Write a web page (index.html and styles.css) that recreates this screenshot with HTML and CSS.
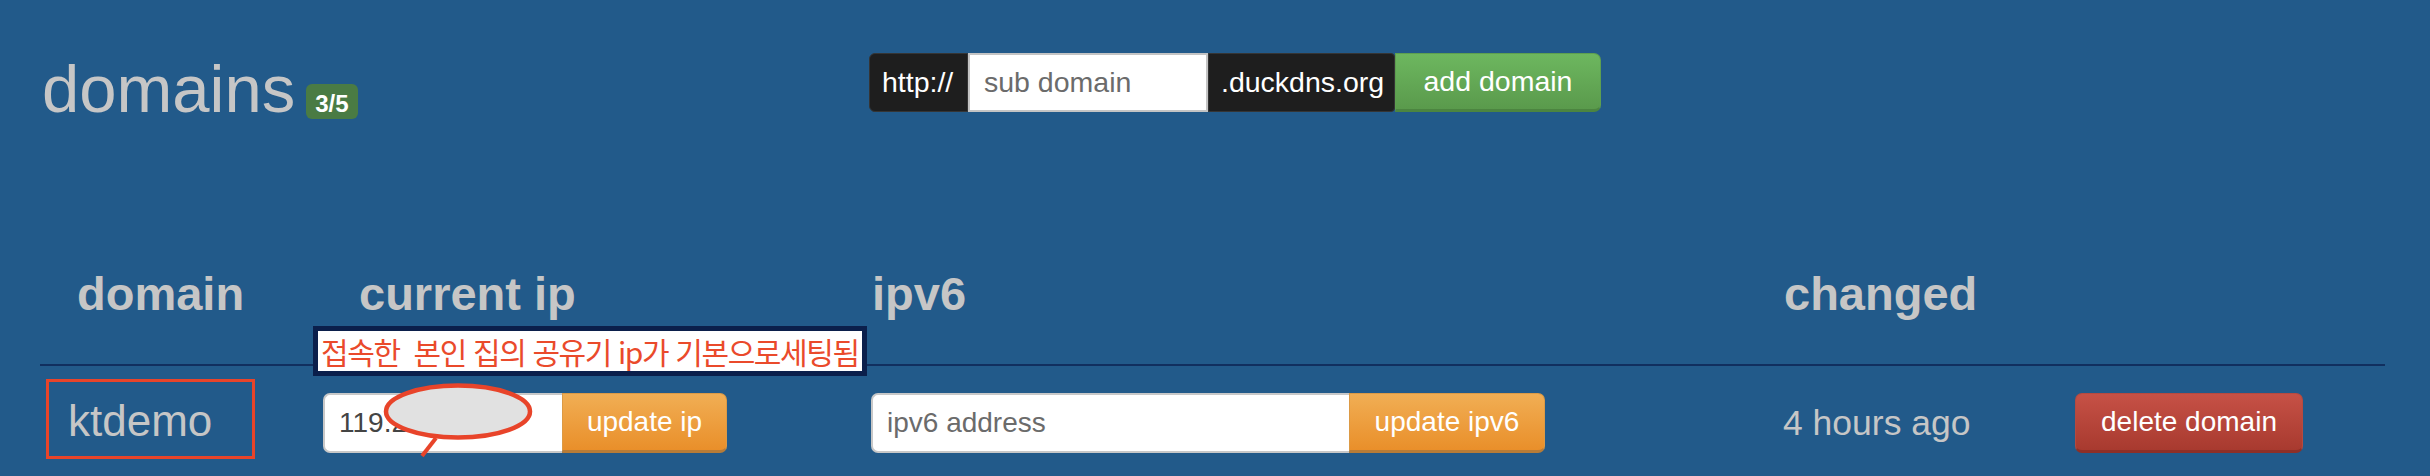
FILE: index.html
```html
<!DOCTYPE html>
<html lang="ko">
<head>
<meta charset="utf-8">
<title>domains</title>
<link rel="stylesheet" href="styles.css">
</head>
<body>
<div class="page">
  <header class="topbar">
    <h1 class="title">domains<span class="badge">3/5</span></h1>
    <form class="add-form">
      <span class="addon addon-first">http://</span>
      <input class="sub-input" type="text" placeholder="sub domain">
      <span class="addon addon-mid">.duckdns.org</span>
      <button type="button" class="btn btn-green btn-last">add domain</button>
    </form>
  </header>

  <section class="domains">
    <div class="grid thead">
      <div class="th th-domain">domain</div>
      <div class="th th-ip">current ip</div>
      <div class="th">ipv6</div>
      <div class="th">changed</div>
      <div class="th"></div>
    </div>
    <div class="grid trow">
      <div class="cell cell-domain">ktdemo</div>
      <div class="cell">
        <div class="group group-ip">
          <input class="field" type="text" value="119.2">
          <button type="button" class="btn btn-orange btn-last">update ip</button>
        </div>
      </div>
      <div class="cell">
        <div class="group group-ipv6">
          <input class="field" type="text" placeholder="ipv6 address">
          <button type="button" class="btn btn-orange btn-last">update ipv6</button>
        </div>
      </div>
      <div class="cell cell-time">4 hours ago</div>
      <div class="cell">
        <button type="button" class="btn btn-red">delete domain</button>
      </div>
    </div>
  </section>

  <div class="note">접속한&nbsp; 본인 집의 공유기 ip가 기본으로세팅됨</div>
  <div class="mark-box"></div>
  <svg class="mark-bubble" width="160" height="82" viewBox="0 0 160 82">
    <line x1="58" y1="60" x2="44" y2="78" stroke="#e8442a" stroke-width="4"/>
    <ellipse cx="80" cy="33.5" rx="72" ry="26" fill="#e1e1e1" stroke="#e8442a" stroke-width="4.5"/>
  </svg>
</div>
</body>
</html>
```

FILE: styles.css
```css
* { box-sizing: border-box; }

html, body {
  margin: 0;
  padding: 0;
}

body {
  background: #225a8a;
  font-family: "Liberation Sans", Arial, Helvetica, sans-serif;
  color: #c6c6c6;
  width: 2430px;
  height: 476px;
  overflow: hidden;
}

.page {
  position: relative;
  height: 476px;
}

/* top bar */
.topbar {
  display: flex;
  align-items: flex-start;
  padding: 53px 0 0 42px;
}

.title {
  flex: 0 0 827px;
  margin: 0;
  padding-top: 2px;
  font-size: 67px;
  line-height: 68px;
  font-weight: normal;
  color: #c6c6c6;
}

.badge {
  display: inline-block;
  vertical-align: baseline;
  margin-left: 11px;
  padding: 8px 9px 3px;
  font-size: 24px;
  line-height: 24px;
  font-weight: bold;
  color: #ffffff;
  background: #4a7b44;
  border-radius: 6px;
}

.add-form {
  display: flex;
  height: 59px;
  margin: 0;
}

.addon {
  display: flex;
  align-items: center;
  height: 59px;
  background: #1e1e1e;
  border: 1px solid #353535;
  color: #ffffff;
  font-size: 28.5px;
}

.addon-first {
  width: 99px;
  padding-left: 12px;
  border-radius: 6px 0 0 6px;
}

.addon-mid {
  width: 187px;
  padding-left: 12px;
  border-radius: 0 4px 4px 0;
}

.sub-input {
  width: 240px;
  height: 59px;
  margin: 0;
  padding: 0 0 0 14px;
  border: 2px solid #c4c4c4;
  border-radius: 0;
  background: #ffffff;
  font-family: inherit;
  font-size: 28.5px;
  color: #444;
  outline: none;
}

.sub-input::placeholder,
.field::placeholder {
  color: #6b6b6b;
}

.btn {
  margin: 0;
  padding: 0;
  font-family: inherit;
  font-size: 28px;
  color: #ffffff;
  cursor: pointer;
  border: 1px solid transparent;
}

.btn-green {
  width: 206px;
  height: 59px;
  font-size: 28.5px;
  background: linear-gradient(#6db75f, #5a9a4c);
  border-color: #5e9f50;
  border-bottom: 3px solid #4c8540;
}

.btn-last {
  border-radius: 0 7px 7px 0;
}

/* domains table */
.domains {
  margin-top: 145px;
  margin-left: 40px;
  width: 2345px;
}

.grid {
  display: grid;
  grid-template-columns: 273px 545px 912px 292px 323px;
}

.thead {
  border-bottom: 2px solid #112f5f;
  padding-bottom: 44px;
}

.th {
  font-size: 47px;
  line-height: 52px;
  font-weight: bold;
  color: #c6c6c6;
  padding-left: 14px;
}

.th-domain { padding-left: 37px; }
.th-ip { padding-left: 46px; }

.trow {
  align-items: center;
  padding-top: 27px;
}

.cell {
  padding-left: 13px;
}

.cell-domain {
  padding-left: 28px;
  padding-bottom: 4px;
  font-size: 44px;
  line-height: 56px;
  color: #c6c6c6;
}

.cell-time {
  font-size: 35.5px;
  line-height: 44px;
  color: #c6c6c6;
}

.group {
  display: flex;
  height: 60px;
}

.group-ip { margin-left: -3px; }

.field {
  height: 60px;
  margin: 0;
  padding: 0 0 0 14px;
  border: 2px solid #c8c8c8;
  border-right: 0;
  border-radius: 7px 0 0 7px;
  background: #ffffff;
  font-family: inherit;
  font-size: 28px;
  color: #444444;
  outline: none;
}

.group-ip .field { width: 239px; }
.group-ip .btn { width: 165px; }
.group-ipv6 .field { width: 478px; }
.group-ipv6 .btn { width: 196px; }

.btn-orange {
  height: 60px;
  background: linear-gradient(#f1ae54, #e98f2a);
  border-color: #dc9a45;
  border-bottom: 3px solid #b77c38;
}

.btn-red {
  width: 228px;
  height: 60px;
  margin-left: 0;
  background: linear-gradient(#c65146, #a83a2f);
  border-color: #b54a40;
  border-bottom: 3px solid #8e2f27;
  border-radius: 7px;
}

/* screenshot annotations */
.note {
  position: absolute;
  left: 313px;
  top: 326px;
  width: 554px;
  height: 50px;
  padding-left: 3px;
  border: 5px solid #0b1f4b;
  background: #ffffff;
  color: #ea4a2b;
  font-family: "Noto Sans CJK KR", "Noto Sans", sans-serif;
  font-size: 30px;
  letter-spacing: -1.4px;
  line-height: 40px;
  white-space: nowrap;
  overflow: hidden;
}

.mark-box {
  position: absolute;
  left: 46px;
  top: 379px;
  width: 209px;
  height: 80px;
  border: 3px solid #e8442a;
}

.mark-bubble {
  position: absolute;
  left: 378px;
  top: 378px;
}
```
